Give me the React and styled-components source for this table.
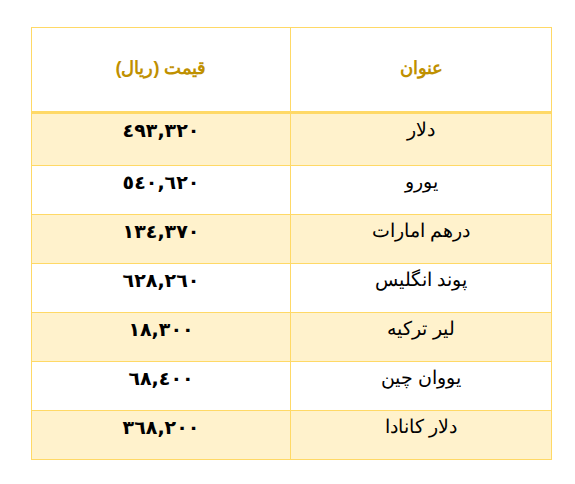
import React from "react";
import styled, { createGlobalStyle } from "styled-components";

const Global = createGlobalStyle`
  html, body { margin: 0; padding: 0; background: #ffffff; }
  body { font-family: "Liberation Sans", sans-serif; }
`;

const Page = styled.div`
  padding: 27px 0 0 31px;
`;

const Table = styled.table`
  direction: rtl;
  width: 520px;
  border-collapse: collapse;
  table-layout: fixed;
`;

const HeadCell = styled.th`
  height: 80px;
  border: 1px solid #ffd966;
  border-bottom: 3px solid #ffd966;
  color: #bf9000;
  font-weight: bold;
  font-size: 18px;
  text-align: center;
  vertical-align: middle;
  padding: 0 0 3px;
`;

const Row = styled.tr`
  background: ${(p) => (p.$striped ? "#fff2cc" : "#ffffff")};
`;

const Cell = styled.td`
  height: ${(p) => (p.$first ? "46px" : "43px")};
  border: 1px solid #ffd966;
  text-align: center;
  vertical-align: top;
  padding: 5px 0 0;
  font-size: 19px;
  font-family: ${(p) => (p.$bold ? '"DejaVu Sans", sans-serif' : '"Liberation Sans", sans-serif')};
  color: #000;
  font-weight: ${(p) => (p.$bold ? "bold" : "normal")};
  line-height: 22px;
`;

const rows = [
  ["دلار", "٤٩٣,٣٢٠"],
  ["یورو", "٥٤٠,٦٢٠"],
  ["درهم امارات", "١٣٤,٣٧٠"],
  ["پوند انگلیس", "٦٢٨,٢٦٠"],
  ["لیر ترکیه", "١٨,٣٠٠"],
  ["یووان چین", "٦٨,٤٠٠"],
  ["دلار کانادا", "٣٦٨,٢٠٠"],
];

export default function App() {
  return (
    <Page>
      <Global />
      <Table>
        <colgroup>
          <col style={{ width: "261px" }} />
          <col style={{ width: "259px" }} />
        </colgroup>
        <thead>
          <tr>
            <HeadCell>عنوان</HeadCell>
            <HeadCell>قیمت (ریال)</HeadCell>
          </tr>
        </thead>
        <tbody>
          {rows.map(([name, price], i) => (
            <Row key={name} $striped={i % 2 === 0}>
              <Cell $first={i === 0}>{name}</Cell>
              <Cell $first={i === 0} $bold>
                {price}
              </Cell>
            </Row>
          ))}
        </tbody>
      </Table>
    </Page>
  );
}
